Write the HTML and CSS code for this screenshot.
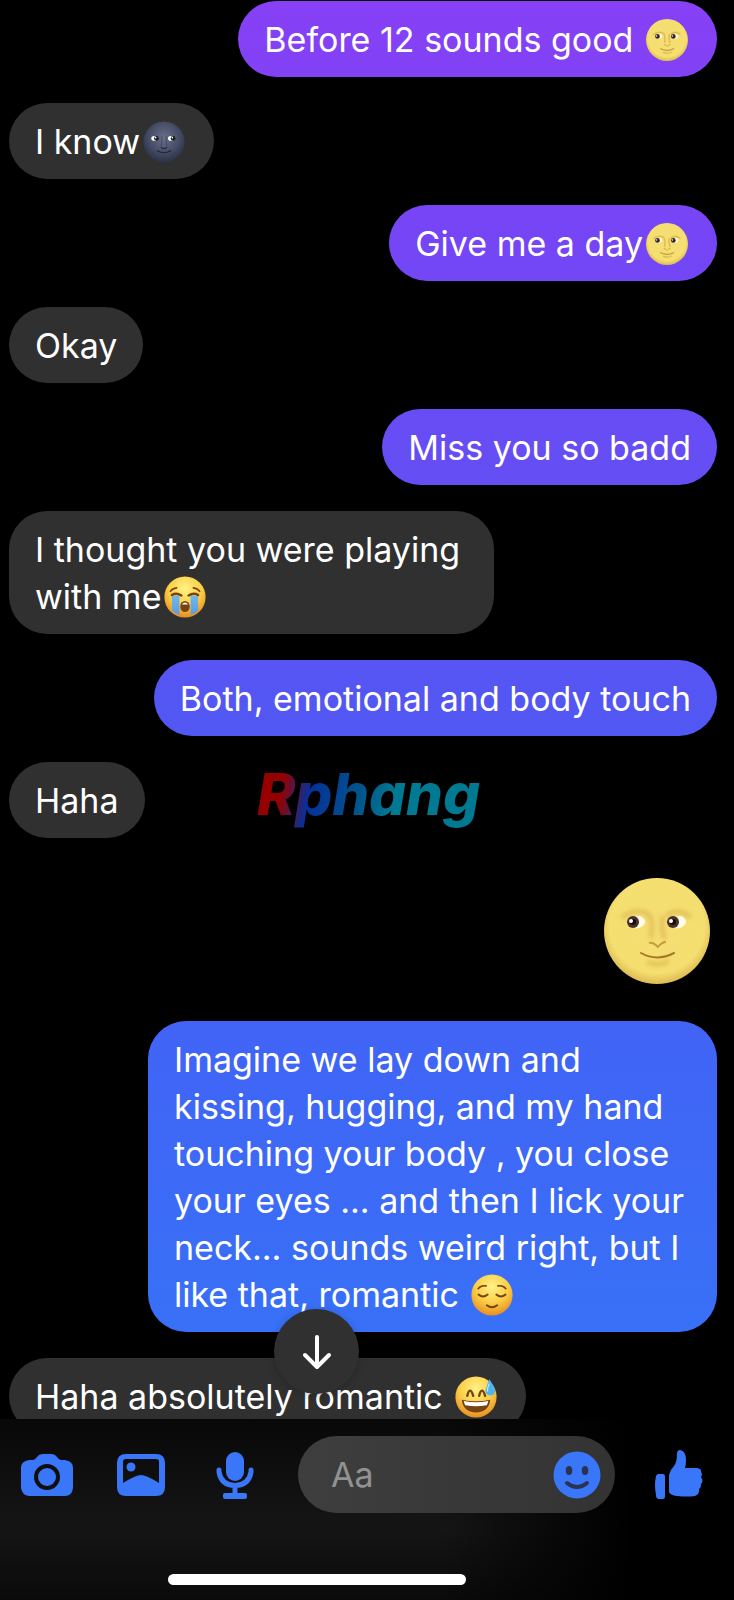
FILE: index.html
```html
<!DOCTYPE html>
<html lang="en">
<head>
<meta charset="utf-8">
<meta name="viewport" content="width=device-width, initial-scale=1">
<title>Chat</title>
<link rel="stylesheet" href="styles.css">
</head>
<body>
<svg class="defs" aria-hidden="true">
  <defs>
    <radialGradient id="moonFill" cx=".5" cy=".45" r=".56">
      <stop offset="0" stop-color="#f5dd74"/><stop offset=".8" stop-color="#f5df70"/><stop offset="1" stop-color="#dcb750"/>
    </radialGradient>
    <radialGradient id="darkFill" cx=".5" cy=".4" r=".6">
      <stop offset="0" stop-color="#68708a"/><stop offset=".6" stop-color="#464d66"/><stop offset="1" stop-color="#2b3044"/>
    </radialGradient>
    <radialGradient id="faceFill" cx=".5" cy=".3" r=".72">
      <stop offset="0" stop-color="#fff287"/><stop offset=".55" stop-color="#fbce47"/><stop offset="1" stop-color="#e68a1c"/>
    </radialGradient>
    <linearGradient id="tearFill" x1="0" y1="0" x2="0" y2="1">
      <stop offset="0" stop-color="#6fb7ea"/><stop offset="1" stop-color="#5a9be0"/>
    </linearGradient>
    <filter id="shade" x="-20%" y="-20%" width="140%" height="140%"><feGaussianBlur stdDeviation="2"/></filter>
    <symbol id="moon" viewBox="0 0 106 106">
      <circle cx="53" cy="53" r="53" fill="url(#moonFill)"/>
      <g fill="none" stroke="#c99f3c" stroke-width="4" opacity=".5" filter="url(#shade)">
        <path d="M18 40Q29 30 43 35Q50 40 47 60"/>
        <path d="M62 38Q74 29 87 39"/>
        <path d="M59 38Q56 50 61 61"/>
        <path d="M43 84Q54 89 65 83"/>
      </g>
      <path d="M23 45Q28 37 36 38Q42 41 41 45Q37 52 29 50Z" fill="#fffbe9"/>
      <path d="M64 45Q69 37 77 38Q83 41 82 45Q78 52 70 50Z" fill="#fffbe9"/>
      <circle cx="29" cy="44" r="6" fill="#4a302a"/><circle cx="69" cy="44" r="6" fill="#4a302a"/>
      <circle cx="29" cy="44" r="3" fill="#150d0c"/><circle cx="69" cy="44" r="3" fill="#150d0c"/>
      <circle cx="27" cy="43" r="2" fill="#fff"/><circle cx="67" cy="43" r="2" fill="#fff"/>
      <path d="M45 65Q49 64 54 69Q58 64 62 64" fill="none" stroke="#b98d2d" stroke-width="2" opacity=".8"/>
      <path d="M37 75Q53 84 70 75" fill="none" stroke="#a8762a" stroke-width="2" stroke-linecap="round"/>
    </symbol>
    <symbol id="darkmoon" viewBox="0 0 106 106">
      <circle cx="53" cy="53" r="52" fill="url(#darkFill)"/>
      <path d="M53 12V60" stroke="#8a91a8" stroke-width="6" opacity=".4" filter="url(#shade)"/>
      <path d="M48 38Q48 54 46 64M58 38Q58 54 61 64" fill="none" stroke="#30364b" stroke-width="2" opacity=".7"/>
      <ellipse cx="29" cy="44" rx="8" ry="6" fill="#fff"/><ellipse cx="71" cy="44" rx="8" ry="6" fill="#fff"/>
      <circle cx="34" cy="44" r="6" fill="#1a1c27"/><circle cx="76" cy="44" r="6" fill="#1a1c27"/>
      <circle cx="32" cy="42" r="2" fill="#fff"/><circle cx="74" cy="42" r="2" fill="#fff"/>
      <path d="M45 66Q53 73 61 66" fill="none" stroke="#1f2436" stroke-width="3"/>
      <path d="M36 75Q53 85 70 75" fill="none" stroke="#1f2436" stroke-width="3" stroke-linecap="round"/>
    </symbol>
    <symbol id="sob" viewBox="0 0 106 106">
      <circle cx="53" cy="53" r="52" fill="url(#faceFill)"/>
      <path d="M20 50H39V99Q29 96 20 88ZM67 50H86V88Q77 96 67 99Z" fill="url(#tearFill)"/>
      <path d="M16 39Q21 31 32 30M90 39Q85 31 74 30" fill="none" stroke="#784312" stroke-width="4" stroke-linecap="round"/>
      <path d="M20 48Q31 41 44 49M62 49Q75 41 86 48" fill="none" stroke="#784312" stroke-width="6" stroke-linecap="round"/>
      <ellipse cx="53" cy="77" rx="12" ry="14" fill="#784312"/>
      <path d="M45 72Q53 62 61 72Z" fill="#fff"/>
    </symbol>
    <symbol id="relieved" viewBox="0 0 106 106">
      <circle cx="53" cy="53" r="52" fill="url(#faceFill)"/>
      <path d="M18 37Q25 28 38 30M88 37Q81 28 68 30" fill="none" stroke="#784312" stroke-width="4" stroke-linecap="round"/>
      <path d="M19 52Q30 62 42 52M64 52Q76 62 87 52" fill="none" stroke="#784312" stroke-width="5" stroke-linecap="round"/>
      <path d="M40 79Q53 89 66 79" fill="none" stroke="#784312" stroke-width="5" stroke-linecap="round"/>
    </symbol>
    <symbol id="sweat" viewBox="0 0 106 106">
      <circle cx="53" cy="53" r="52" fill="url(#faceFill)"/>
      <path d="M31 50Q34 37 38 37Q42 37 46 50M61 50Q64 37 68 37Q72 37 76 50" fill="none" stroke="#784312" stroke-width="6" stroke-linecap="round"/>
      <path d="M17 60Q53 68 89 60Q86 91 53 92Q20 91 17 60Z" fill="#784312"/>
      <path d="M22 63Q53 70 84 63Q83 70 80 74Q53 79 26 74Q23 70 22 63Z" fill="#fff"/>
      <path d="M87 8Q101 29 101 37Q100 49 89 49Q77 48 77 37Q78 28 87 8Z" fill="#4fb4ee"/>
      <path d="M86 20Q81 31 82 38" fill="none" stroke="#bfe6ff" stroke-width="3" stroke-linecap="round"/>
    </symbol>
  </defs>
</svg>

<div class="app">
  <main class="thread">
    <p class="bubble sent">Before 12 sounds good <svg class="emoji" role="img" aria-label="full moon face"><use href="#moon"/></svg></p>
    <p class="bubble received">I know<svg class="emoji" role="img" aria-label="new moon face"><use href="#darkmoon"/></svg></p>
    <p class="bubble sent">Give me a day<svg class="emoji" role="img" aria-label="full moon face"><use href="#moon"/></svg></p>
    <p class="bubble received">Okay</p>
    <p class="bubble sent">Miss you so badd</p>
    <p class="bubble received short-wrap">I thought you were playing<br>with me<svg class="emoji" role="img" aria-label="loudly crying face"><use href="#sob"/></svg></p>
    <p class="bubble sent">Both, emotional and body touch</p>
    <p class="bubble received">Haha</p>
    <p class="sticker"><svg class="big-emoji" role="img" aria-label="full moon face"><use href="#moon"/></svg></p>
    <p class="bubble sent long-wrap">Imagine we lay down and<br>kissing, hugging, and my hand<br>touching your body , you close<br>your eyes ... and then I lick your<br>neck... sounds weird right, but I<br>like that, romantic <svg class="emoji" role="img" aria-label="relieved face"><use href="#relieved"/></svg></p>
    <p class="bubble received">Haha absolutely romantic <svg class="emoji" role="img" aria-label="grinning face with sweat"><use href="#sweat"/></svg></p>
    <div class="watermark">Rphang</div>
    <button class="jump" type="button" aria-label="Scroll to latest">
      <svg width="30" height="36" viewBox="0 0 30 36" fill="none" stroke="#fff" stroke-width="4" stroke-linecap="round" stroke-linejoin="round"><path d="M15 3V33M3 21L15 33L27 21"/></svg>
    </button>
  </main>

  <footer class="composer">
    <div class="tools">
      <button class="tool" type="button" aria-label="Camera">
        <svg width="52" height="44" viewBox="0 0 52 44"><path fill="#3a76f8" fill-rule="evenodd" d="M8 7H12Q14 7 16 4Q18 1 22 1H30Q34 1 36 4Q38 7 40 7H44Q52 8 52 15V35Q51 43 44 43H8Q1 42 0 35V15Q0 8 8 7ZM26 11A13 13 0 1 0 26 37A13 13 0 1 0 26 11Z"/><circle cx="26" cy="24" r="9" fill="#3a76f8"/></svg>
      </button>
      <button class="tool" type="button" aria-label="Photos">
        <svg width="48" height="44" viewBox="0 0 48 44"><path fill="#3a76f8" fill-rule="evenodd" d="M9 1H39Q48 1 48 10V34Q48 43 39 43H9Q0 43 0 34V10Q0 1 9 1ZM9 6Q6 6 6 9V30Q19 22 24 22Q29 22 42 30V9Q42 6 39 6Z"/><circle cx="14" cy="14" r="4.500" fill="#3a76f8"/></svg>
      </button>
      <button class="tool" type="button" aria-label="Voice message">
        <svg width="38" height="48" viewBox="0 0 38 48"><rect x="10" y="1" width="18" height="29" rx="9" fill="#3a76f8"/><path d="M3 19V21Q5 34 19 34.500Q33 34 35 21V19M19 36V43" fill="none" stroke="#3a76f8" stroke-width="5" stroke-linecap="round"/><rect x="7" y="42" width="24" height="6" rx="2" fill="#3a76f8"/></svg>
      </button>
      <div class="field">
        <input class="entry" type="text" placeholder="Aa" aria-label="Message">
        <button class="smile" type="button" aria-label="Emoji">
          <svg width="48" height="48" viewBox="0 0 48 48"><circle cx="24" cy="24" r="23.500" fill="#3a76f8"/><ellipse cx="16" cy="19.500" rx="3.300" ry="4.500" fill="#283452"/><ellipse cx="32" cy="19.500" rx="3.300" ry="4.500" fill="#283452"/><path d="M14 32Q24 40 34 32" fill="none" stroke="#283452" stroke-width="4" stroke-linecap="round"/></svg>
        </button>
      </div>
      <button class="tool like" type="button" aria-label="Like">
        <svg width="48" height="50" viewBox="0 0 48 50" fill="#3a76f8"><path d="M3 24H8Q10 24 10 27V46Q10 49 8 49H4Q1 49 1 45Q-1 35 1 26Q2 24 3 24Z"/><path d="M22 4Q22 0 25 0Q31 1 31 10Q31 15 30 18H42Q47 19 46 22Q48 24 46 27Q49 31 46 34Q46 38 44 39Q45 44 40 46Q32 47 22 46Q15 45 14 42V25Q15 20 19 16Q22 12 22 4Z"/></svg>
      </button>
    </div>
    <div class="home"></div>
  </footer>
</div>
</body>
</html>
```

FILE: styles.css
```css
* {
  box-sizing: border-box;
}

body {
  margin: 0;
  background: #000;
  color: #fff;
  font-family: Inter, "Liberation Sans", sans-serif;
}

button {
  padding: 0;
  border: 0;
  background: none;
}

svg {
  flex: none;
}

.defs {
  position: absolute;
  width: 0;
  height: 0;
}

.app {
  display: flex;
  flex-direction: column;
  height: 100vh;
}

.thread {
  position: relative;
  flex: 1;
  min-height: 0;
  display: flex;
  flex-direction: column;
  align-items: flex-start;
  gap: 26px;
  padding: 1px 17px 0 9px;
  overflow: hidden;
}

.bubble {
  flex: none;
  margin: 0;
  padding: 15px 26px 14px;
  border-radius: 38px;
  font-size: 34px;
  line-height: 47px;
}

.received {
  background: #303030;
}

.sent {
  align-self: flex-end;
  background: linear-gradient(#8740f6, #7446f5 16%, #5257f3 45%, #4065f6 66%, #3870f7 83%) fixed;
}

.short-wrap {
  min-width: 485px;
}

.long-wrap {
  min-width: 569px;
}

.emoji {
  width: 42px;
  height: 42px;
  margin: 0 3px;
  vertical-align: -9px;
}

.sticker {
  flex: none;
  align-self: flex-end;
  margin: 0;
  padding: 14px 7px 11px;
}

.big-emoji {
  display: block;
  width: 106px;
  height: 106px;
}

.watermark {
  position: absolute;
  top: 762px;
  left: 35%;
  padding: 0 6px 6px 0;
  background: linear-gradient(100deg, #960000 12%, #05309a 24%, #00558c 45%, #007a92 60%);
  background-clip: text;
  color: transparent;
  font-size: 58px;
  font-style: italic;
  font-weight: 800;
  line-height: 64px;
}

.jump {
  position: absolute;
  bottom: 25px;
  left: 274px;
  display: grid;
  place-items: center;
  width: 85px;
  height: 85px;
  border-radius: 50%;
  background: #303030;
  box-shadow: 0 2px 8px rgba(0, 0, 0, .2);
}

.composer {
  flex: none;
  padding-top: 17px;
  background: linear-gradient(90deg, transparent 60%, #000 86%), linear-gradient(#080808, #151515 60%, #0a0a0a);
}

.tools {
  display: flex;
  align-items: center;
}

.tool {
  display: grid;
  place-items: center;
  flex: none;
  width: 94px;
  height: 77px;
}

.field {
  display: flex;
  align-items: center;
  flex: 1;
  min-width: 0;
  height: 77px;
  margin: 0 17px 0 16px;
  padding: 0 14px 0 33px;
  border-radius: 39px;
  background: linear-gradient(90deg, #3e3e3e, #333);
}

.entry {
  flex: 1;
  min-width: 0;
  padding: 0;
  border: 0;
  outline: 0;
  background: none;
  color: #fff;
  font: inherit;
  font-size: 34px;
}

.entry::placeholder {
  color: #929292;
  opacity: 1;
}

.smile svg {
  display: block;
}

.like {
  margin-right: 8px;
}

.home {
  width: 298px;
  height: 11px;
  margin: 61px 0 15px 168px;
  border-radius: 6px;
  background: #fff;
}
```
